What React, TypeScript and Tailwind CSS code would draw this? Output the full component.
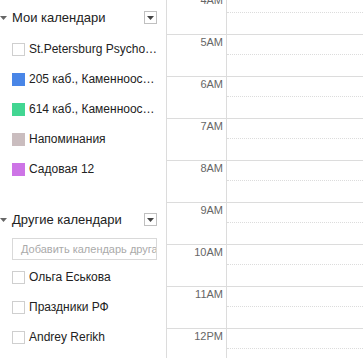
import React from 'react'

type Cal = { name: string; color?: string }

const MY_CALENDARS: Cal[] = [
  { name: 'St.Petersburg Psycho…' },
  { name: '205 каб., Каменноос…', color: 'bg-[#4986e7]' },
  { name: '614 каб., Каменноос…', color: 'bg-[#42d692]' },
  { name: 'Напоминания', color: 'bg-[#cabdbf]' },
  { name: 'Садовая 12', color: 'bg-[#cd74e6]' },
]

const OTHER_CALENDARS: Cal[] = [
  { name: 'Ольга Еськова' },
  { name: 'Праздники РФ' },
  { name: 'Andrey Rerikh' },
]

const HOURS = ['4AM', '5AM', '6AM', '7AM', '8AM', '9AM', '10AM', '11AM', '12PM']

function SectionHeader({ title }: { title: string }) {
  return (
    <div className="flex h-[27px] items-center">
      {/* collapse arrow */}
      <svg className="ml-[0px] h-[4px] w-[7px] shrink-0" viewBox="0 0 7 4">
        <path d="M0 0h7L3.5 4z" fill="#666" />
      </svg>
      <span className="ml-[5px] flex-1 text-[13px] text-[#222]">{title}</span>
      <div className="mr-[9px] flex h-[13px] w-[13px] items-center justify-center border border-[#c0c0c0] bg-white">
        <svg className="h-[4px] w-[7px]" viewBox="0 0 7 4">
          <path d="M0 0h7L3.5 4z" fill="#444" />
        </svg>
      </div>
    </div>
  )
}

function CalendarRow({ cal }: { cal: Cal }) {
  return (
    <div className="flex h-[30px] items-center pl-[12px]">
      {cal.color ? (
        <div className={`h-[13px] w-[13px] shrink-0 ${cal.color}`}></div>
      ) : (
        <div className="h-[13px] w-[13px] shrink-0 border border-[#cfcfcf] bg-white"></div>
      )}
      <span className="ml-[4px] whitespace-nowrap text-[12px] text-[#222]">{cal.name}</span>
    </div>
  )
}

export default function App() {
  return (
    <div
      className="flex h-[358px] w-[363px] overflow-hidden bg-white"
      style={{ fontFamily: '"Liberation Sans", Arial, sans-serif' }}
    >
      {/* Sidebar */}
      <div className="w-[167px] shrink-0 border-r border-[#dcdcdc]">
        <div className="mt-[4px]">
          <SectionHeader title="Мои календари" />
        </div>
        <div className="mt-[3px]">
          {MY_CALENDARS.map((cal) => (
            <CalendarRow key={cal.name} cal={cal} />
          ))}
        </div>

        <div className="mt-[22px]">
          <SectionHeader title="Другие календари" />
        </div>
        <div className="mt-[5px] pl-[12px] pr-[9px]">
          <div className="flex h-[22px] items-center overflow-hidden border border-[#d9d9d9] pl-[8px]">
            <span className="whitespace-nowrap text-[11px] text-[#aaa]">Добавить календарь друга</span>
          </div>
        </div>
        <div className="mt-[2px]">
          {OTHER_CALENDARS.map((cal) => (
            <CalendarRow key={cal.name} cal={cal} />
          ))}
        </div>
      </div>

      {/* Time grid */}
      <div className="min-w-0 flex-1">
        <div className="-mt-[8px]">
          {HOURS.map((h) => (
            <div key={h} className="flex h-[42px] border-t border-[#dcdcdc]">
              <div className="w-[60px] shrink-0 border-r border-[#dcdcdc] pr-[3px] pt-[1px] text-right text-[11px] leading-[13px] text-[#666]">
                {h}
              </div>
              <div className="flex-1">
                <div className="h-[20px] border-b border-dotted border-[#dcdcdc]"></div>
              </div>
            </div>
          ))}
        </div>
      </div>
    </div>
  )
}
